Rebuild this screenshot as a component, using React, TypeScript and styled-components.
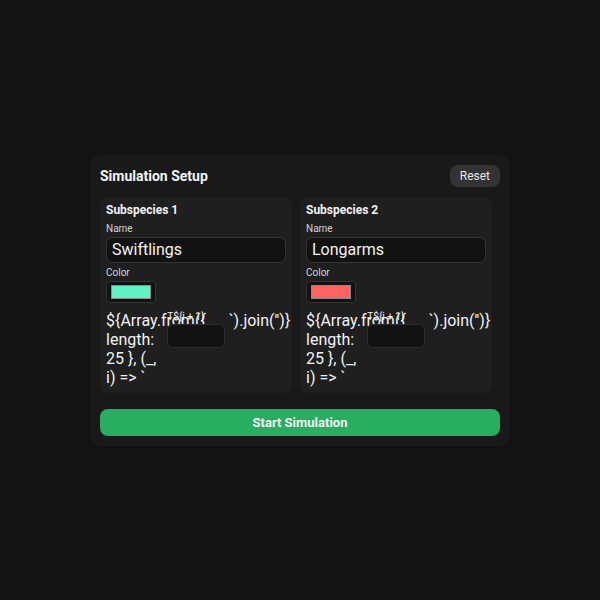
import React from 'react'
import styled, { createGlobalStyle } from 'styled-components'

const GlobalStyle = createGlobalStyle`
html, body {
  margin: 0;
  padding: 0;
  background: #131313;
  font-family: Roboto, "Liberation Sans", sans-serif;
  color: #f2f2f2;
}
#root {
  min-height: 600px;
}
`;

const Page = styled.div`
width: 600px;
height: 600px;
display: flex;
align-items: center;
justify-content: center;
`;

const Panel = styled.div`
width: 420px;
box-sizing: border-box;
padding: 10px;
background: #19191a;
border-radius: 10px;
display: flex;
flex-direction: column;
gap: 10px;
`;

const Header = styled.div`
display: flex;
align-items: center;
justify-content: space-between;
height: 22px;
`;

const Title = styled.h2`
margin: 0;
font-size: 14px;
font-weight: 700;
color: #f4f4f4;
`;

const ResetButton = styled.button`
height: 22px;
padding: 0 10px;
border: none;
border-radius: 8px;
background: #333334;
color: #e8e8e8;
font-family: inherit;
font-size: 12px;
`;

const Cards = styled.div`
display: grid;
grid-template-columns: repeat(2, 192px);
gap: 8px;
`;

const Card = styled.div`
background: #1f1f20;
border-radius: 8px;
padding: 6px;
overflow: hidden;
display: flex;
flex-direction: column;
`;

const CardTitle = styled.div`
font-size: 12px;
font-weight: 700;
color: #f2f2f2;
line-height: 14px;
margin-bottom: 6px;
`;

const FieldLabel = styled.div`
font-size: 10px;
line-height: 12px;
color: #d4d4d4;
margin-bottom: 2px;
`;

const TextInput = styled.input`
box-sizing: border-box;
width: 100%;
height: 26px;
padding: 0 5px;
margin-bottom: 4px;
background: #121212;
border: 1px solid #343435;
border-radius: 6px;
color: #f2f2f2;
font-family: inherit;
font-size: 16px;
outline: none;
`;

const Swatch = styled.div`
box-sizing: border-box;
width: 50px;
height: 22px;
padding: 3px 4px;
background: #121212;
border: 1px solid #343435;
border-radius: 4px;
`;

const SwatchFill = styled.div<{ $color: string }>`
width: 100%;
height: 100%;
background: ${p => p.$color};
border: 1px solid #8a8a8a;
box-sizing: border-box;
`;

const TraitGrid = styled.div`
margin-top: 8px;
display: grid;
grid-template-columns: repeat(3, 1fr);
gap: 4px;
font-size: 16px;
line-height: 19px;
color: #f2f2f2;
`;

const TraitSlot = styled.div`
min-width: 0;
`;

const TraitLabel = styled.div`
position: relative;
font-size: 10px;
line-height: 12px;
color: #f2f2f2;
margin-bottom: 1px;
`;

const TraitInput = styled.input`
box-sizing: border-box;
width: 100%;
height: 24px;
background: #121212;
border: 1px solid #2c2c2d;
border-radius: 6px;
`;

const StartButton = styled.button`
margin-top: 6px;
height: 27px;
border: none;
border-radius: 8px;
background: #27ae60;
color: #f4f4f4;
font-family: inherit;
font-size: 13px;
font-weight: 700;
`;

const species = [
  { title: 'Subspecies 1', name: 'Swiftlings', color: '#5ef2c4' },
  { title: 'Subspecies 2', name: 'Longarms', color: '#ff6464' },
];

const App = () => {
  return (
    <>
      <GlobalStyle />
      <Page>
        <Panel>
          <Header>
            <Title>Simulation Setup</Title>
            <ResetButton>Reset</ResetButton>
          </Header>
          <Cards>
            {species.map(s => (
              <Card key={s.title}>
                <CardTitle>{s.title}</CardTitle>
                <FieldLabel>Name</FieldLabel>
                <TextInput defaultValue={s.name} />
                <FieldLabel>Color</FieldLabel>
                <Swatch>
                  <SwatchFill $color={s.color} />
                </Swatch>
                <TraitGrid>
                  <TraitSlot>{'${Array.from({ length: 25 }, (_, i) => `'}</TraitSlot>
                  <TraitSlot>
                    <TraitLabel>{'T${i + 1}'}</TraitLabel>
                    <TraitInput />
                  </TraitSlot>
                  <TraitSlot>{"`).join('')}"}</TraitSlot>
                </TraitGrid>
              </Card>
            ))}
          </Cards>
          <StartButton>Start Simulation</StartButton>
        </Panel>
      </Page>
    </>
  )
}

export default App
